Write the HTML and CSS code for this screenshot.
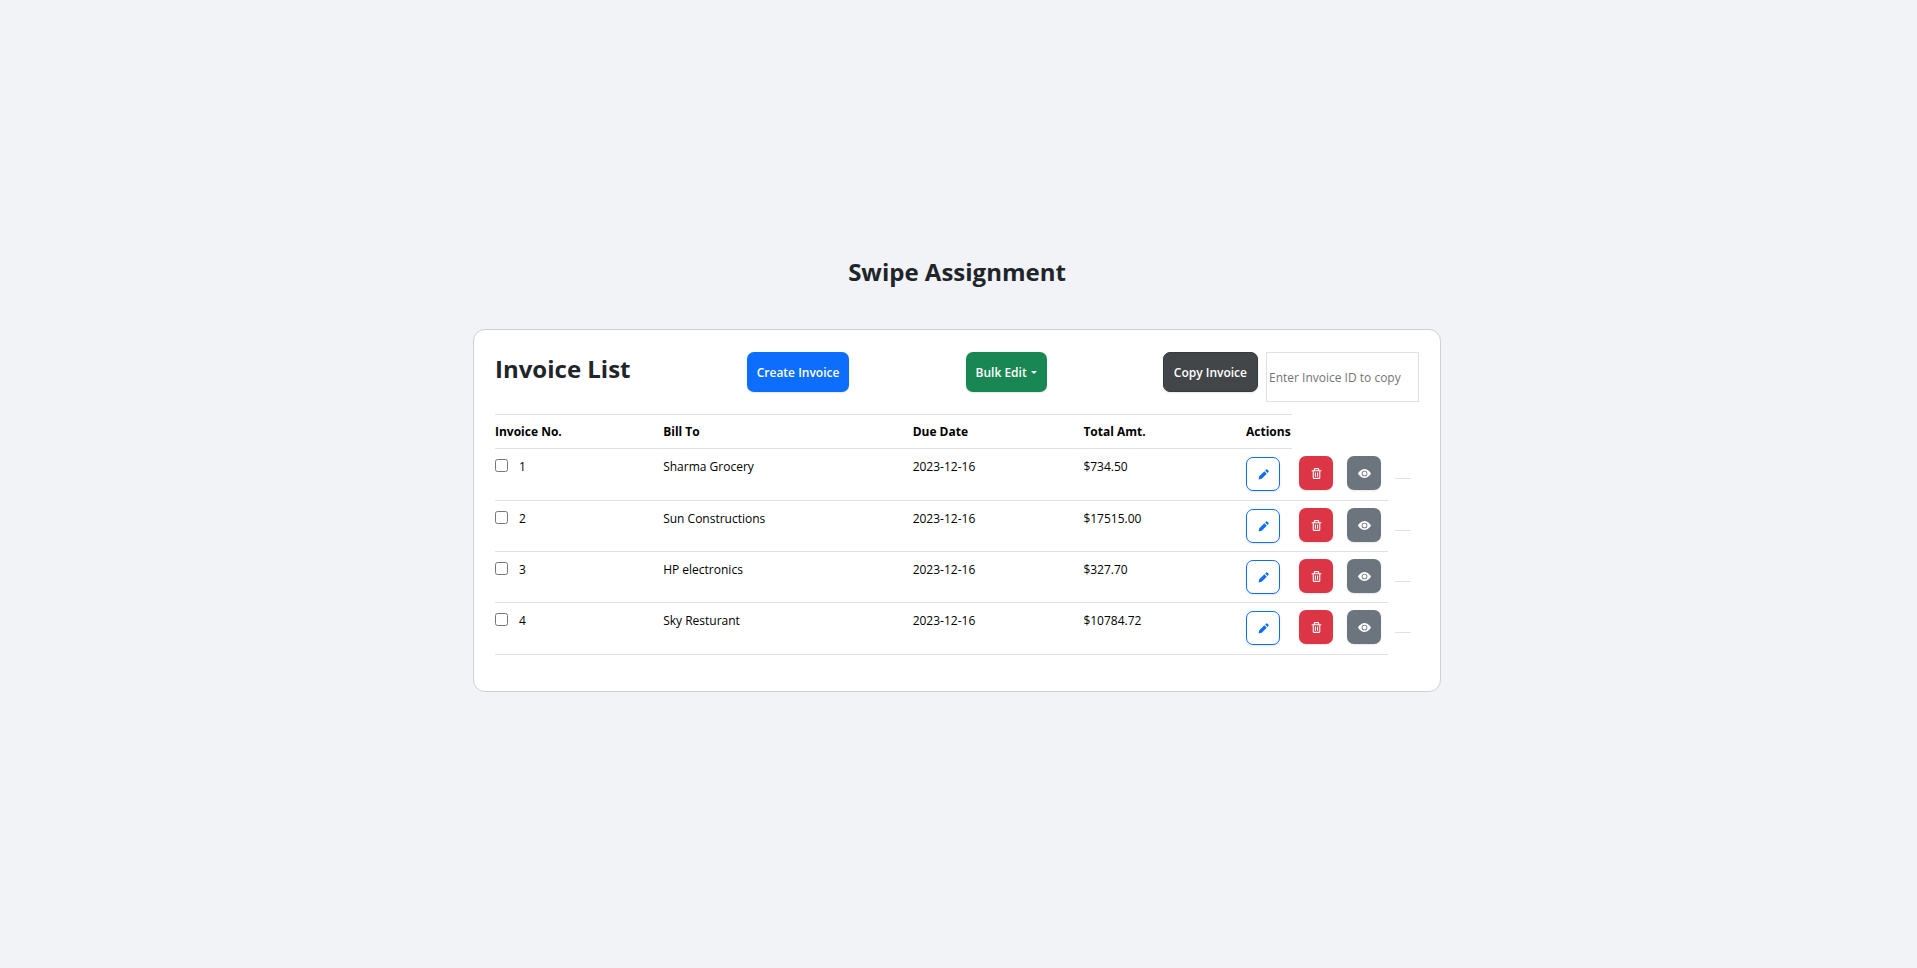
FILE: index.html
```html
<!DOCTYPE html>
<html lang="en">
<head>
<meta charset="utf-8">
<meta name="viewport" content="width=device-width, initial-scale=1">
<title>Swipe Assignment</title>
<link rel="stylesheet" href="styles.css">
</head>
<body>
<svg class="sprite" aria-hidden="true">
  <symbol id="pencil" viewBox="0 0 24 24"><path d="M8.707 19.707 18 10.414 13.586 6l-9.293 9.293a1.003 1.003 0 0 0-.263.464L3 21l5.242-1.03c.176-.044.337-.135.465-.263zM21 7.414a2 2 0 0 0 0-2.828L19.414 3a2 2 0 0 0-2.828 0L15 4.586 19.414 9 21 7.414z"/></symbol>
  <symbol id="trash" viewBox="0 0 24 24"><path d="M5 20a2 2 0 0 0 2 2h10a2 2 0 0 0 2-2V8h2V6h-4V4a2 2 0 0 0-2-2H9a2 2 0 0 0-2 2v2H3v2h2zM9 4h6v2H9zM8 8h9v12H7V8z"/><path d="M9 10h2v8H9zm4 0h2v8h-2z"/></symbol>
  <symbol id="eye" viewBox="0 0 16 16"><path d="M10.500 8a2.500 2.500 0 1 1-5 0 2.500 2.500 0 0 1 5 0z"/><path d="M0 8s3-5.500 8-5.500S16 8 16 8s-3 5.500-8 5.500S0 8 0 8zm8 3.500a3.500 3.500 0 1 0 0-7 3.500 3.500 0 0 0 0 7z"/></symbol>
</svg>
<main class="page">
  <h1 class="title">Swipe Assignment</h1>
  <section class="card">
    <div class="toolbar">
      <h2 class="heading">Invoice List</h2>
      <button class="btn btn-primary" type="button">Create Invoice</button>
      <button class="btn btn-success" type="button">Bulk Edit<span class="caret"></span></button>
      <div class="copy">
        <button class="btn btn-dark" type="button">Copy Invoice</button>
        <input class="copy-input" type="text" aria-label="Invoice ID to copy" placeholder="Enter Invoice ID to copy">
      </div>
    </div>
    <table class="invoices">
      <colgroup><col class="c-no"><col class="c-bill"><col class="c-date"><col class="c-total"><col class="c-edit"><col class="c-act"><col class="c-act"><col class="c-end"></colgroup>
      <thead>
        <tr><th>Invoice No.</th><th>Bill To</th><th>Due Date</th><th>Total Amt.</th><th>Actions</th></tr>
      </thead>
      <tbody>
        <tr>
          <td><label class="pick"><input type="checkbox">1</label></td><td>Sharma Grocery</td><td>2023-12-16</td><td>$734.50</td>
          <td class="act"><button class="icon-btn edit" type="button" aria-label="Edit"><svg><use href="#pencil"/></svg></button></td>
          <td class="act mid"><button class="icon-btn delete" type="button" aria-label="Delete"><svg><use href="#trash"/></svg></button></td>
          <td class="act mid"><button class="icon-btn view" type="button" aria-label="View"><svg><use href="#eye"/></svg></button></td>
          <td class="end"><hr></td>
        </tr>
        <tr>
          <td><label class="pick"><input type="checkbox">2</label></td><td>Sun Constructions</td><td>2023-12-16</td><td>$17515.00</td>
          <td class="act"><button class="icon-btn edit" type="button" aria-label="Edit"><svg><use href="#pencil"/></svg></button></td>
          <td class="act mid"><button class="icon-btn delete" type="button" aria-label="Delete"><svg><use href="#trash"/></svg></button></td>
          <td class="act mid"><button class="icon-btn view" type="button" aria-label="View"><svg><use href="#eye"/></svg></button></td>
          <td class="end"><hr></td>
        </tr>
        <tr>
          <td><label class="pick"><input type="checkbox">3</label></td><td>HP electronics</td><td>2023-12-16</td><td>$327.70</td>
          <td class="act"><button class="icon-btn edit" type="button" aria-label="Edit"><svg><use href="#pencil"/></svg></button></td>
          <td class="act mid"><button class="icon-btn delete" type="button" aria-label="Delete"><svg><use href="#trash"/></svg></button></td>
          <td class="act mid"><button class="icon-btn view" type="button" aria-label="View"><svg><use href="#eye"/></svg></button></td>
          <td class="end"><hr></td>
        </tr>
        <tr>
          <td><label class="pick"><input type="checkbox">4</label></td><td>Sky Resturant</td><td>2023-12-16</td><td>$10784.72</td>
          <td class="act"><button class="icon-btn edit" type="button" aria-label="Edit"><svg><use href="#pencil"/></svg></button></td>
          <td class="act mid"><button class="icon-btn delete" type="button" aria-label="Delete"><svg><use href="#trash"/></svg></button></td>
          <td class="act mid"><button class="icon-btn view" type="button" aria-label="View"><svg><use href="#eye"/></svg></button></td>
          <td class="end"><hr></td>
        </tr>
      </tbody>
    </table>
  </section>
</main>
</body>
</html>
```
FILE: styles.css
```css
*, *::before, *::after { box-sizing: border-box; }

body {
  margin: 0;
  background: #f1f3f7;
  color: #212529;
  font: 12px/20px "Segoe UI", "Open Sans", "Noto Sans", sans-serif;
}

button, input { font: inherit; }

.sprite { display: none; }

.page {
  min-height: 100vh;
  padding: 0 15px 24px 12px;
  display: flex;
  flex-direction: column;
  align-items: center;
  justify-content: center;
}

.title, .heading {
  margin: 0;
  font-size: 24px;
  font-weight: 700;
}

.title { line-height: 40px; margin-bottom: 37px; }
.heading { line-height: 34px; }

.card {
  width: 100%;
  max-width: 968px;
  padding: 22px 21px 36px;
  background: #fff;
  border: 1px solid #ced0d3;
  border-radius: 12px;
}

.toolbar {
  display: flex;
  justify-content: space-between;
  align-items: flex-start;
  margin-bottom: 12px;
}

.btn {
  height: 40px;
  padding: 1px 10px 0;
  border: 0;
  border-radius: 7px;
  color: #fff;
  font-weight: 600;
  box-shadow: 0 1px 2px rgba(0, 0, 0, .1);
}

.btn-primary { background: #0d6efd; }
.btn-success { background: #198754; }
.btn-dark { background: #424649; border: 1px solid #373b3e; }

.caret {
  display: inline-block;
  margin-left: 4px;
  vertical-align: 3px;
  border: 3px solid transparent;
  border-top-color: currentColor;
  border-bottom: 0;
}

.copy { display: flex; align-items: flex-start; gap: 8px; }

.copy-input {
  width: 153px;
  height: 50px;
  padding: 0 2px;
  border: 1px solid #dee2e6;
  background: #fff;
}

.copy-input::placeholder { color: #757575; opacity: 1; }

.invoices {
  width: 100%;
  table-layout: fixed;
  border-collapse: separate;
  border-spacing: 0;
  color: #000;
}

.c-edit { width: 46px; }
.c-act { width: 48px; }
.c-end { width: 31px; }
.c-no { width: 18.2%; }
.c-bill { width: 27%; }
.c-total { width: 17.6%; }

th, td { padding: 0; text-align: left; white-space: nowrap; }

th {
  height: 35px;
  border-top: 1px solid #dee2e6;
  border-bottom: 1px solid #dee2e6;
  font-weight: 700;
}

td {
  height: 51px;
  padding-top: 8px;
  vertical-align: top;
  border-bottom: 1px solid #dee2e6;
}

tr:first-child td, tr:last-child td { height: 52px; }

.pick { display: flex; align-items: flex-start; gap: 11px; }
.pick input { width: 13px; height: 13px; margin: 2px 0 0; }

.act.mid { padding-left: 7px; padding-top: 7px; }

.icon-btn {
  display: flex;
  align-items: center;
  justify-content: center;
  width: 34px;
  height: 34px;
  padding: 0;
  border: 1px solid transparent;
  border-radius: 7px;
  color: #fff;
  box-shadow: 0 1px 2px rgba(0, 0, 0, .1);
}

.icon-btn svg { width: 13px; height: 13px; fill: currentColor; }
.edit { background: #fff; border-color: #0d6efd; color: #0d6efd; }
.delete { background: #dc3545; }
.view { background: #6c757d; }

.end { border: 0; padding: 29px 8px 0 7px; }
.end hr { margin: 0; border: 0; border-top: 1px solid #dee2e6; }
```
